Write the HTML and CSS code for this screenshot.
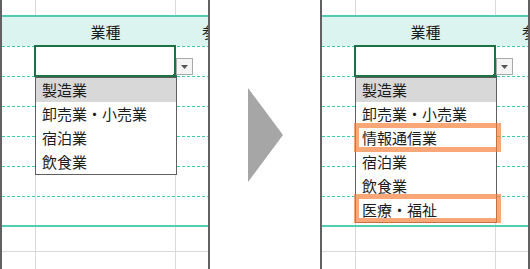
FILE: index.html
```html
<!DOCTYPE html>
<html lang="ja">
<head>
<meta charset="utf-8">
<link rel="stylesheet" href="styles.css">
</head>
<body>
<main class="stage">
  <section class="panel">
    <div class="r r-top"></div>
    <div class="r r-head"><span class="c1"></span><span class="c2">業種</span><span class="c3">参加</span></div>
    <div class="r r-data"></div>
    <div class="r r-data"></div>
    <div class="r r-data"></div>
    <div class="r r-data"></div>
    <div class="r r-data"></div>
    <div class="r r-data r-last"></div>
    <div class="r r-total"></div>
    <div class="r r-foot"></div>
    <div class="sel"></div>
    <div class="handle"></div>
    <div class="btn"><svg width="7" height="4" viewBox="0 0 7 4"><polygon points="0,0 7,0 3.5,4" fill="#555"/></svg></div>
    <ul class="list">
      <li class="on">製造業</li>
      <li>卸売業・小売業</li>
      <li>宿泊業</li>
      <li>飲食業</li>
    </ul>
  </section>
  <div class="gap">
    <svg width="110" height="269" viewBox="0 0 110 269"><polygon points="38,88 73,135 38,182" fill="#a6a6a6"/></svg>
  </div>
  <section class="panel">
    <div class="r r-top"></div>
    <div class="r r-head"><span class="c1"></span><span class="c2">業種</span><span class="c3">参加</span></div>
    <div class="r r-data"></div>
    <div class="r r-data"></div>
    <div class="r r-data"></div>
    <div class="r r-data"></div>
    <div class="r r-data"></div>
    <div class="r r-data r-last"></div>
    <div class="r r-total"></div>
    <div class="r r-foot"></div>
    <div class="sel"></div>
    <div class="handle"></div>
    <div class="btn"><svg width="7" height="4" viewBox="0 0 7 4"><polygon points="0,0 7,0 3.5,4" fill="#555"/></svg></div>
    <ul class="list">
      <li class="on">製造業</li>
      <li>卸売業・小売業</li>
      <li>情報通信業</li>
      <li>宿泊業</li>
      <li>飲食業</li>
      <li>医療・福祉</li>
    </ul>
    <div class="mark mark-1"></div>
    <div class="mark mark-2"></div>
  </section>
</main>
</body>
</html>
```
FILE: styles.css
```css
* { box-sizing: border-box; }
html, body { margin: 0; padding: 0; background: #fff; }
body {
  width: 530px;
  height: 269px;
  overflow: hidden;
  font-family: "Noto Sans CJK JP", "Noto Sans", sans-serif;
  font-size: 15px;
  color: #1c1c1c;
}
.stage { display: flex; height: 269px; }
.panel {
  position: relative;
  width: 210px;
  height: 269px;
  overflow: hidden;
  border-left: 2px solid #616161;
  border-right: 2px solid #616161;
  background:
    linear-gradient(#dadada, #dadada) 33px 0 / 1px 100% no-repeat,
    linear-gradient(#dadada, #dadada) 173px 0 / 1px 100% no-repeat,
    #fff;
}
.gap { width: 110px; height: 269px; }
.gap svg { display: block; }

.r { width: 100%; }
.r-top { height: 15px; }
.r-head {
  height: 31px;
  border-top: 2px solid #52cdb3;
  background: #dcf4ef;
  display: grid;
  grid-template-columns: 33px 140px 1fr;
  line-height: 29px;
  white-space: nowrap;
}
.r-head .c2 { text-align: center; padding-left: 1px; }
.r-head .c3 { padding-left: 27px; }
.r-data {
  height: 30px;
  background: repeating-linear-gradient(90deg, #3ccfa7 0 3px, transparent 3px 5px) 0 0 / 100% 1px no-repeat;
}
.r-last { height: 29px; }
.r-total { height: 26px; border-top: 2px solid #52cdb3; }
.r-foot { height: 18px; border-top: 1px solid #dadada; }

.sel {
  position: absolute;
  left: 32px;
  top: 45px;
  width: 142px;
  height: 32px;
  border: 2px solid #1e7145;
}
.handle {
  position: absolute;
  left: 171px;
  top: 74px;
  width: 4px;
  height: 4px;
  background: #1e7145;
}
.btn {
  position: absolute;
  left: 174px;
  top: 58px;
  width: 17px;
  height: 17px;
  border: 1px solid #a9a9a9;
  background: #f5f5f5;
  display: flex;
  align-items: center;
  justify-content: center;
}
.btn svg { display: block; }
.list {
  position: absolute;
  left: 33px;
  top: 77px;
  width: 142px;
  margin: 0;
  padding: 0;
  list-style: none;
  background: #fff;
  border: 1px solid #5f5f5f;
}
.list li {
  height: 24px;
  line-height: 24px;
  padding-left: 6px;
  white-space: nowrap;
}
.list li.on { background: #d8d8d8; }
.mark {
  position: absolute;
  left: 32px;
  width: 147px;
  height: 29px;
  border: 5px solid rgba(247, 125, 55, 0.68);
}
.mark-1 { top: 123px; }
.mark-2 { top: 194px; }
```
